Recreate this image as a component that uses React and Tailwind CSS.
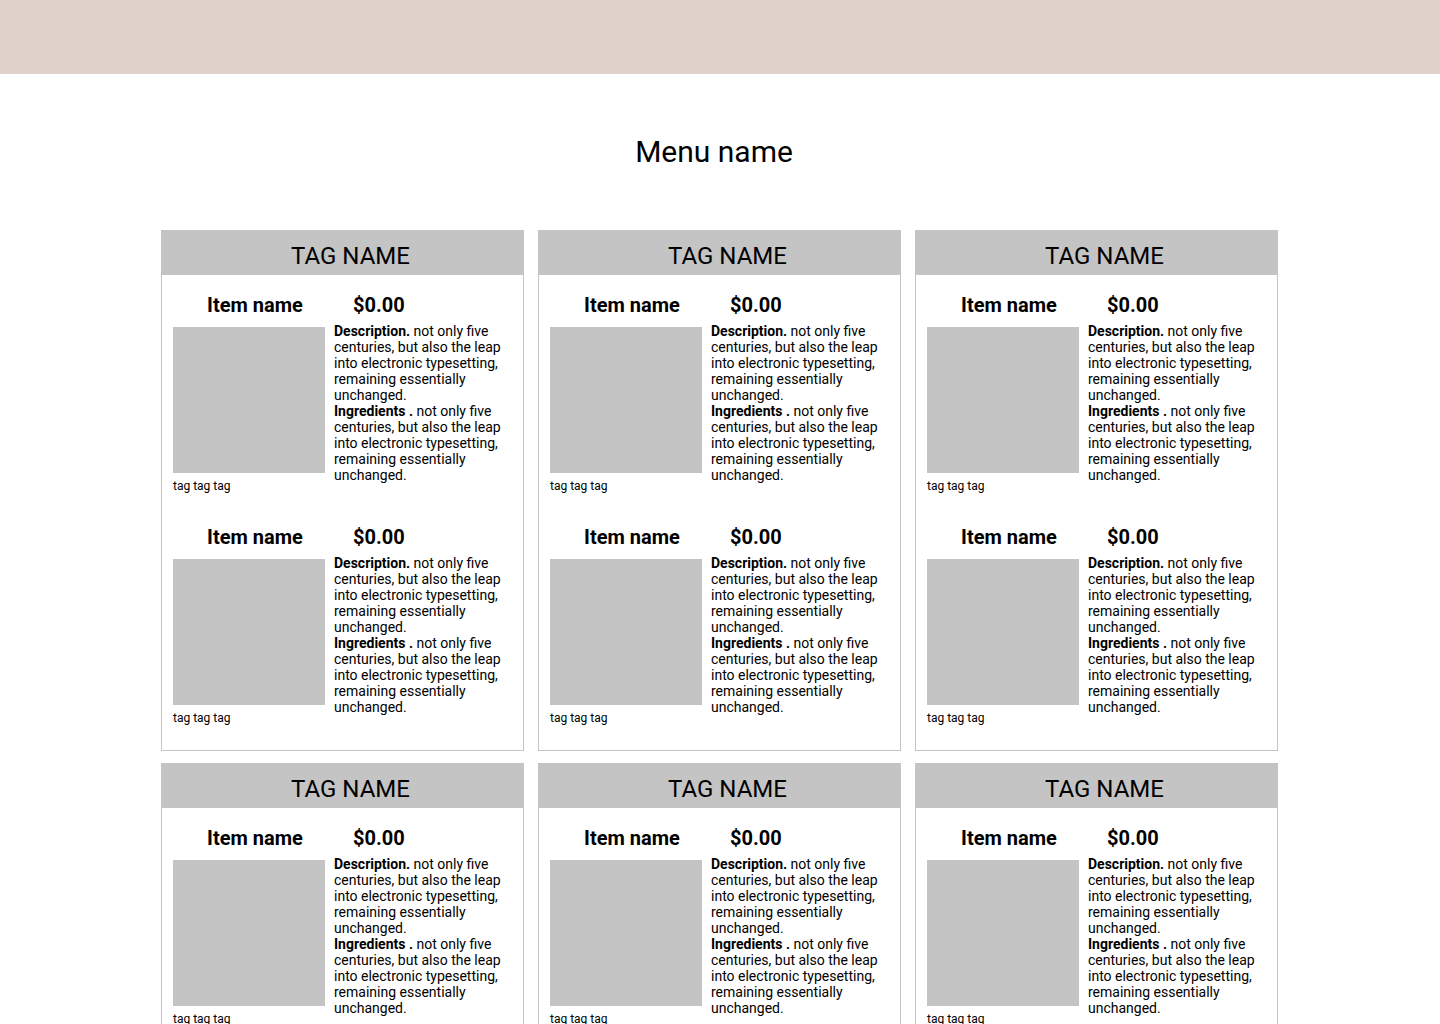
const items = [1, 2];
const cards = [1, 2, 3, 4, 5, 6];

const MenuItem = () => (
  <div className="flex flex-col">
    <div className="flex items-center h-6">
      <div className="w-[164px] text-center text-[20px] font-bold leading-6">Item name</div>
      <div className="ml-4 text-[20px] font-bold leading-6">$0.00</div>
    </div>
    <div className="flex items-start">
      <div className="flex flex-col mt-[10px]">
        <div className="w-[152px] h-[146px] bg-[#c4c4c4]" />
        <div className="mt-[6px] text-[12px] leading-[14px]">tag tag tag</div>
      </div>
      <div className="ml-[9px] mt-[6px] w-[180px] text-[14px] leading-4">
        <p>
          <span className="font-bold">Description.</span> not only five centuries, but also the leap into electronic
          typesetting, remaining essentially unchanged.
        </p>
        <p>
          <span className="font-bold">Ingredients .</span> not only five centuries, but also the leap into electronic
          typesetting, remaining essentially unchanged.
        </p>
      </div>
    </div>
  </div>
);

const Card = () => (
  <div className="border border-[#c4c4c4] bg-white">
    <div className="h-[44px] bg-[#c4c4c4] flex items-center justify-center pl-4 pt-[5px] text-[24px] leading-7">
      TAG NAME
    </div>
    <div className="px-[11px] pt-[18px] pb-[25px] flex flex-col gap-[32px]">
      {items.map((i) => (
        <MenuItem key={i} />
      ))}
    </div>
  </div>
);

export default function App() {
  return (
    <div className="min-h-screen bg-white text-black font-['Roboto',sans-serif]">
      <header className="h-[74px] bg-[#e0d3cb]" />
      <h1 className="mt-[60px] pr-[12px] text-center text-[30px] leading-9">Menu name</h1>
      <div className="mt-[60px] ml-[161px] w-[1117px] grid grid-cols-3 gap-x-[14px] gap-y-[12px]">
        {cards.map((c) => (
          <Card key={c} />
        ))}
      </div>
    </div>
  );
}
